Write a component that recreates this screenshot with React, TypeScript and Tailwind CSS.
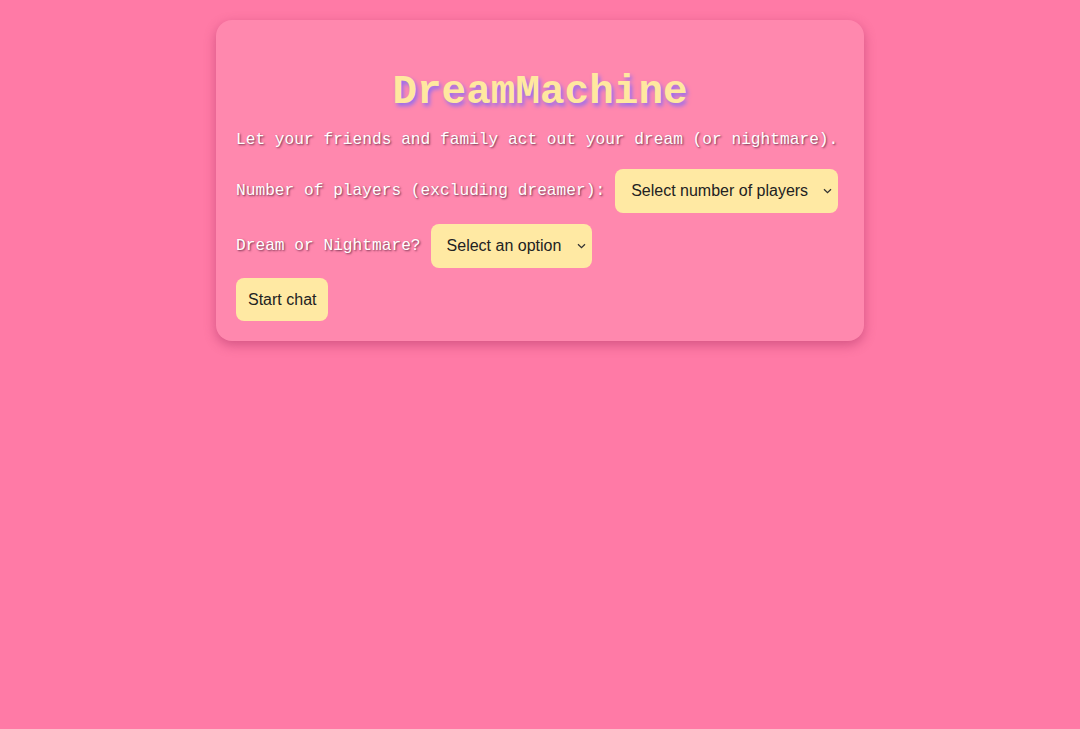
import React from "react";

const mono = { fontFamily: '"Liberation Mono", "Courier New", monospace' };

function Chevron() {
  return (
    <svg
      width="9"
      height="6"
      viewBox="0 0 9 6"
      className="pointer-events-none absolute right-[6px] top-1/2 -translate-y-1/2"
    >
      <path d="M1 1.2 L4.5 4.6 L8 1.2" fill="none" stroke="#333" strokeWidth="1.3" />
    </svg>
  );
}

function Select({ options, className }: { options: string[]; className: string }) {
  return (
    <div className="relative">
      <select
        className={`h-11 appearance-none rounded-lg bg-[#ffe9a3] pl-4 text-base text-[#222] [font-family:'Liberation_Sans',Arial,sans-serif] [text-shadow:none] ${className}`}
      >
        {options.map((o) => (
          <option key={o}>{o}</option>
        ))}
      </select>
      <Chevron />
    </div>
  );
}

export default function App() {
  return (
    <div className="min-h-[729px] bg-[#ff7aa6] pt-5">
      {/* Card */}
      <div className="mx-auto w-[648px] rounded-2xl bg-[#ff88ae] px-5 pt-[22px] pb-5 shadow-[0_4px_12px_rgba(160,40,90,0.45)]">
        <h1
          className="mt-[27px] mb-[15px] text-center text-[41px] leading-[46px] font-bold text-[#ffe89f] [text-shadow:2px_3px_4px_#8f6cf2]"
          style={mono}
        >
          DreamMachine
        </h1>

        <div
          className="text-[16.2px] text-white [text-shadow:1px_1px_2px_rgba(70,20,45,0.75)]"
          style={mono}
        >
          <p className="mb-[19px] leading-[20px]">
            Let your friends and family act out your dream (or nightmare).
          </p>

          <div className="flex items-center gap-[10px]">
            <label>Number of players (excluding dreamer):</label>
            <Select
              className="w-[223px] pr-7"
              options={["Select number of players", "1", "2", "3", "4", "5"]}
            />
          </div>

          <div className="mt-[11px] flex items-center gap-[10px]">
            <label>Dream or Nightmare?</label>
            <Select
              className="w-[161px] pr-7"
              options={["Select an option", "Dream", "Nightmare"]}
            />
          </div>

          <button className="mt-[10px] h-[43px] rounded-lg bg-[#ffe9a3] px-3 text-base text-[#222] [font-family:'Liberation_Sans',Arial,sans-serif] [text-shadow:none]">
            Start chat
          </button>
        </div>
      </div>
    </div>
  );
}
